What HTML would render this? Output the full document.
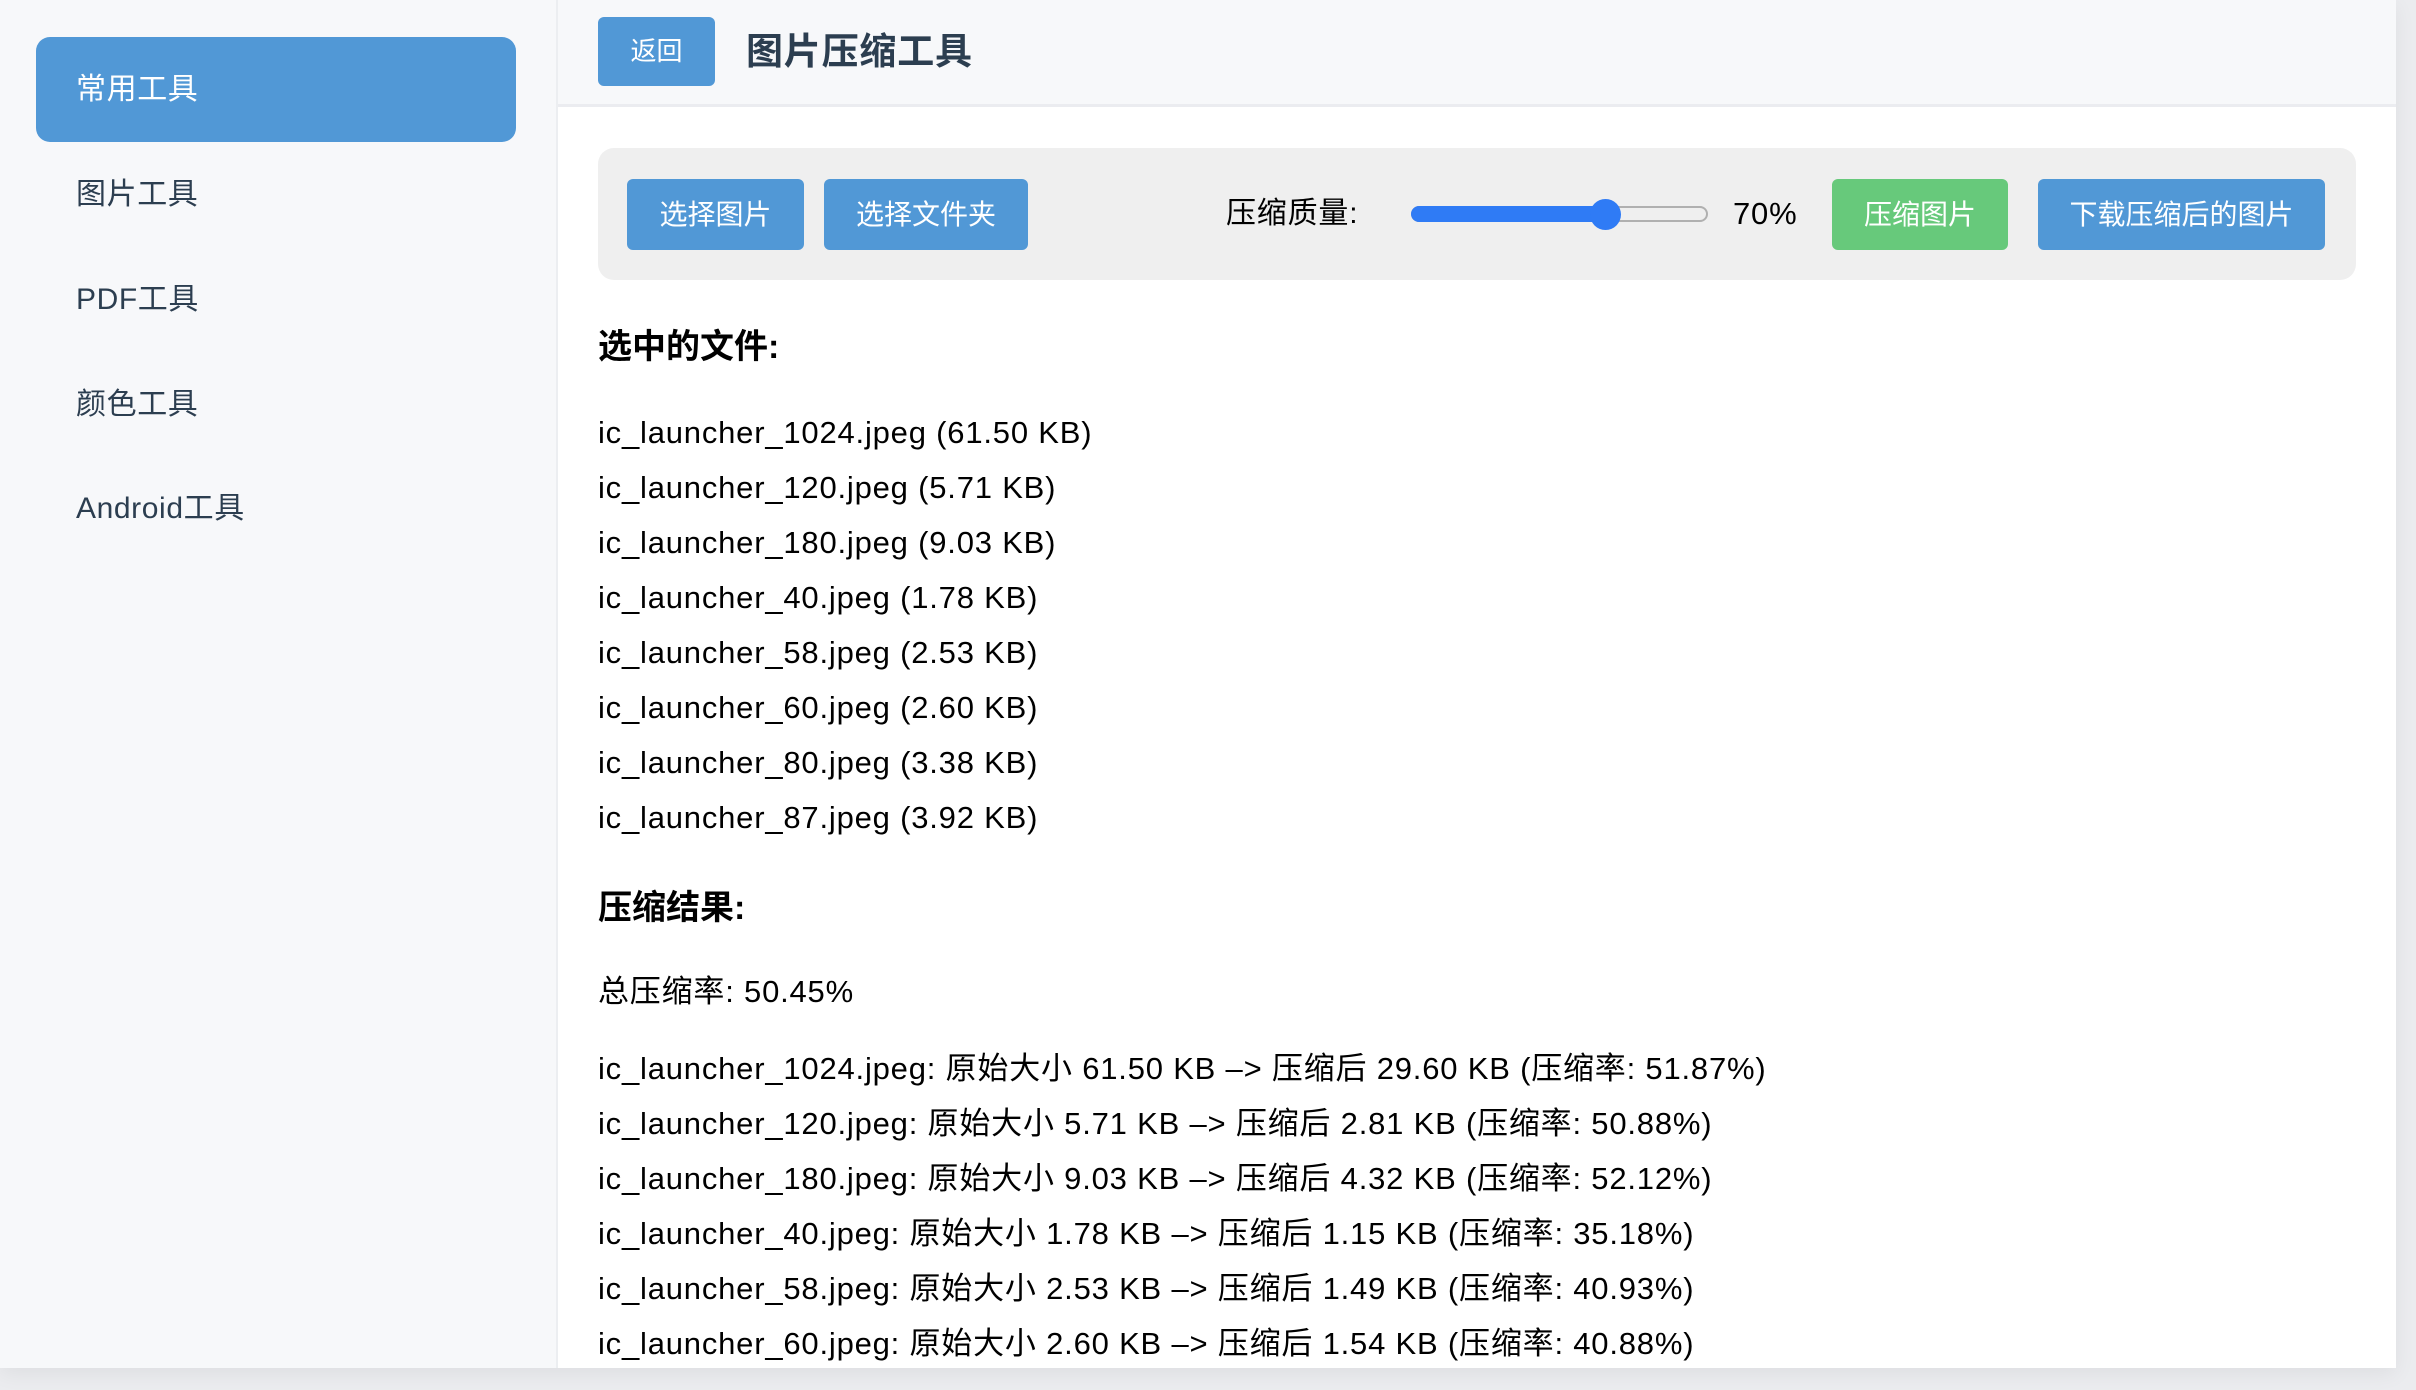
<!DOCTYPE html>
<html><head><meta charset="utf-8"><style>
*{margin:0;padding:0;box-sizing:border-box}
body{width:2416px;height:1390px;background:#ebecef;font-family:"Liberation Sans","Noto Sans CJK SC",sans-serif;position:relative;overflow:hidden}
.app{position:absolute;left:0;top:0;width:2396px;height:1368px;background:#fff;box-shadow:0 6px 20px rgba(0,0,0,.06)}
.side{position:absolute;left:0;top:0;width:558px;height:1368px;background:#f7f8fa;border-right:2px solid #eceef1}
.item{position:absolute;left:36px;width:480px;height:105px;line-height:105px;padding-left:40px;font-size:30px;color:#2c3e50;letter-spacing:0.6px}
.item.active{background:#5198d6;color:#fff;border-radius:14px}
.head{position:absolute;left:558px;top:0;right:0;height:107px;background:#f7f8fa;border-bottom:3px solid #ebecf0}
.btn{position:absolute;color:#fff;background:#5198d6;border-radius:6px;text-align:center;font-size:28px}
.title{position:absolute;left:746px;top:22px;font-size:37px;font-weight:bold;color:#2c3e50;line-height:60px;letter-spacing:0.8px}
.bar{position:absolute;left:598px;top:148px;width:1758px;height:132px;background:#efefef;border-radius:16px}
.t{position:absolute;font-size:31px;color:#000;white-space:nowrap;line-height:40px;letter-spacing:0.8px}
h3{position:absolute;left:598px;font-size:34px;font-weight:bold;line-height:44px}
</style></head><body>
<div class="app">
<div class="side">
<div class="item active" style="top:37px">常用工具</div>
<div class="item" style="top:142px">图片工具</div>
<div class="item" style="top:247px">PDF工具</div>
<div class="item" style="top:352px">颜色工具</div>
<div class="item" style="top:456px">Android工具</div>
</div>
<div class="head"></div>
<div class="btn" style="left:598px;top:17px;width:117px;height:69px;line-height:69px;font-size:26px">返回</div>
<div class="title">图片压缩工具</div>
<div class="bar"></div>
<div class="btn" style="left:627px;top:179px;width:177px;height:71px;line-height:71px">选择图片</div>
<div class="btn" style="left:824px;top:179px;width:204px;height:71px;line-height:71px">选择文件夹</div>
<div class="t" style="left:1226px;top:194px;font-size:30px">压缩质量:</div>
<div style="position:absolute;left:1411px;top:206px;width:297px;height:16px;border-radius:8px;background:#efefef;border:2px solid #b0b0b0"></div>
<div style="position:absolute;left:1411px;top:206px;width:200px;height:16px;border-radius:8px;background:#2f7bf5"></div>
<div style="position:absolute;left:1590px;top:199px;width:31px;height:31px;border-radius:50%;background:#2f7bf5"></div>
<div class="t" style="left:1733px;top:194px;font-size:31px">70%</div>
<div class="btn" style="left:1832px;top:179px;width:176px;height:71px;line-height:71px;background:#67c97b">压缩图片</div>
<div class="btn" style="left:2038px;top:179px;width:287px;height:71px;line-height:71px">下载压缩后的图片</div>
<h3 style="top:325px">选中的文件:</h3>
<div class="t" style="left:598px;top:413px">ic_launcher_1024.jpeg (61.50 KB)</div>
<div class="t" style="left:598px;top:468px">ic_launcher_120.jpeg (5.71 KB)</div>
<div class="t" style="left:598px;top:523px">ic_launcher_180.jpeg (9.03 KB)</div>
<div class="t" style="left:598px;top:578px">ic_launcher_40.jpeg (1.78 KB)</div>
<div class="t" style="left:598px;top:633px">ic_launcher_58.jpeg (2.53 KB)</div>
<div class="t" style="left:598px;top:688px">ic_launcher_60.jpeg (2.60 KB)</div>
<div class="t" style="left:598px;top:743px">ic_launcher_80.jpeg (3.38 KB)</div>
<div class="t" style="left:598px;top:798px">ic_launcher_87.jpeg (3.92 KB)</div>
<h3 style="top:886px">压缩结果:</h3>
<div class="t" style="left:598px;top:972px">总压缩率: 50.45%</div>
<div class="t" style="left:598px;top:1049px">ic_launcher_1024.jpeg: 原始大小 61.50 KB –&gt; 压缩后 29.60 KB (压缩率: 51.87%)</div>
<div class="t" style="left:598px;top:1104px">ic_launcher_120.jpeg: 原始大小 5.71 KB –&gt; 压缩后 2.81 KB (压缩率: 50.88%)</div>
<div class="t" style="left:598px;top:1159px">ic_launcher_180.jpeg: 原始大小 9.03 KB –&gt; 压缩后 4.32 KB (压缩率: 52.12%)</div>
<div class="t" style="left:598px;top:1214px">ic_launcher_40.jpeg: 原始大小 1.78 KB –&gt; 压缩后 1.15 KB (压缩率: 35.18%)</div>
<div class="t" style="left:598px;top:1269px">ic_launcher_58.jpeg: 原始大小 2.53 KB –&gt; 压缩后 1.49 KB (压缩率: 40.93%)</div>
<div class="t" style="left:598px;top:1324px">ic_launcher_60.jpeg: 原始大小 2.60 KB –&gt; 压缩后 1.54 KB (压缩率: 40.88%)</div>
</div>
</body></html>
